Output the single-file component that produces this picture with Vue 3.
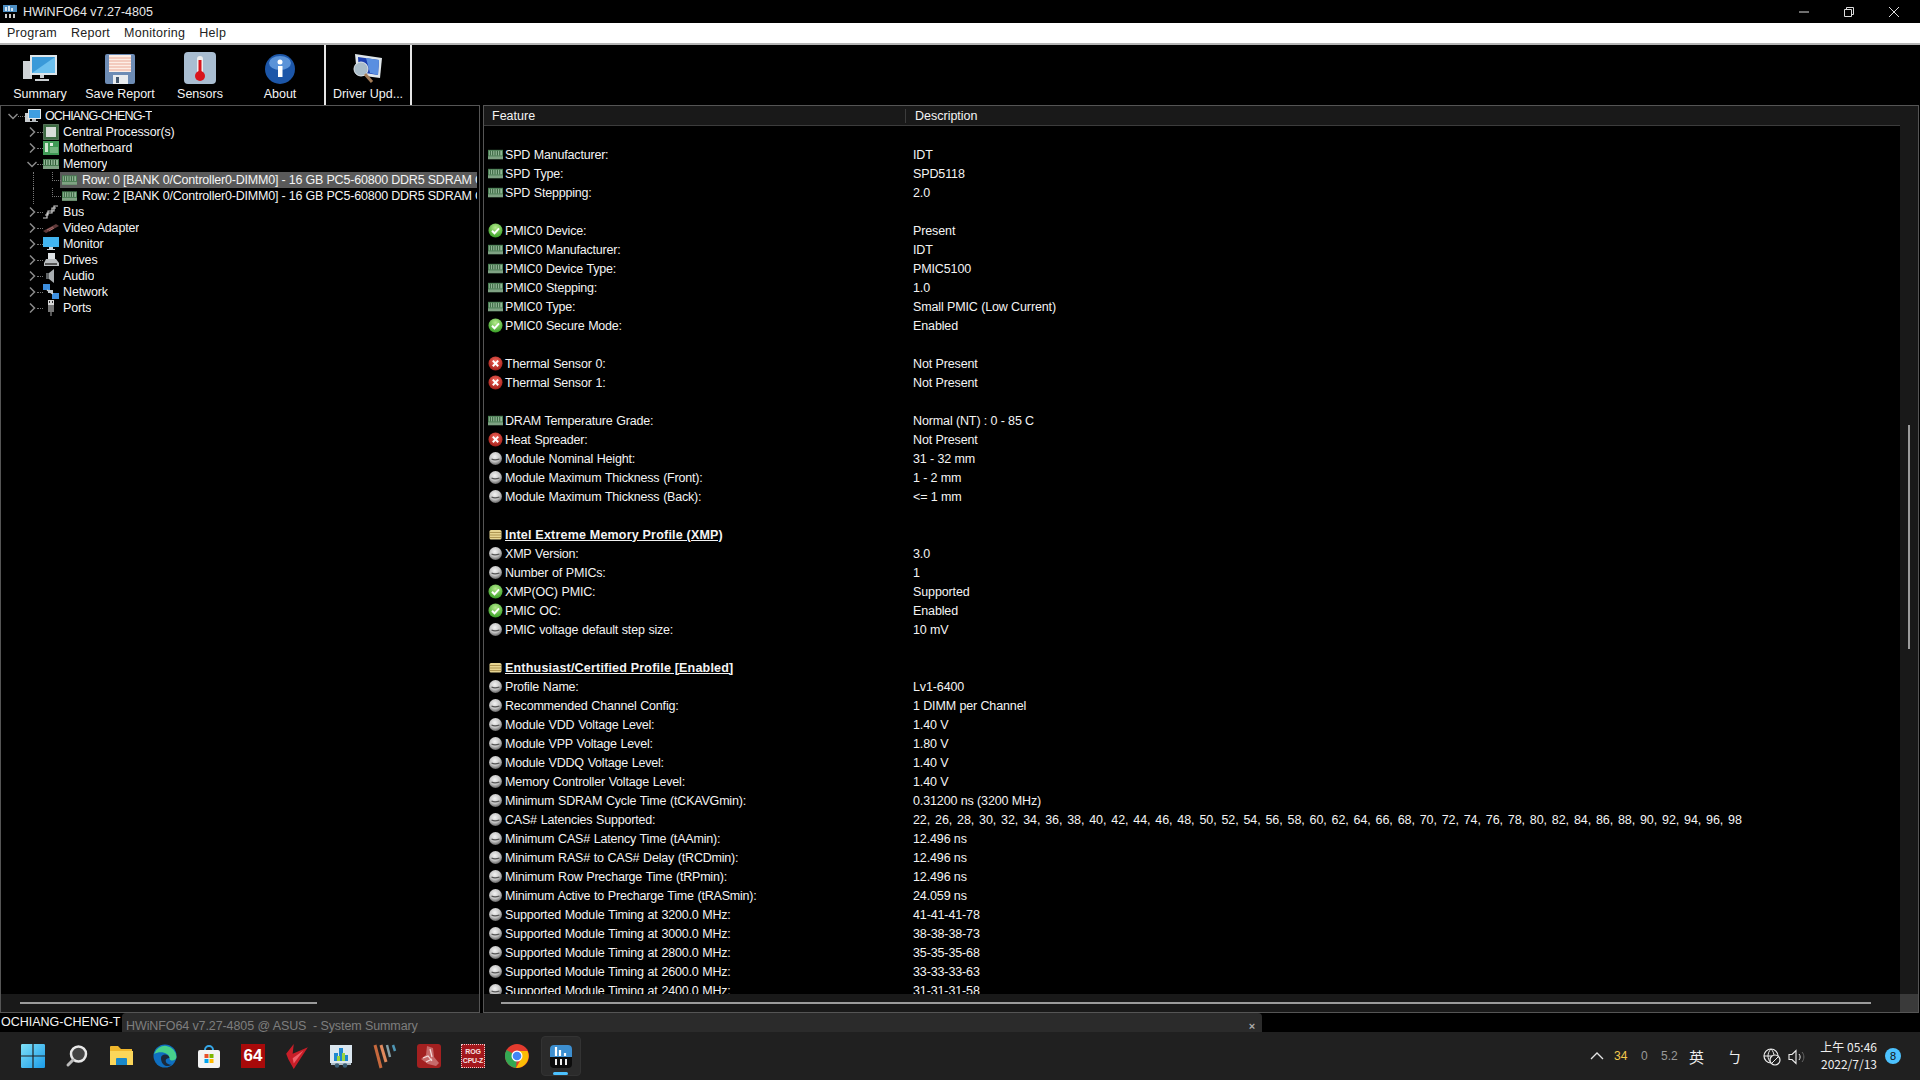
<template>
  <div class="window">
    <svg class="defs" width="0" height="0">
      <defs>
        <linearGradient id="win-blue" x1="0" y1="0" x2="1" y2="1">
          <stop offset="0" stop-color="#7fe0f7" />
          <stop offset="1" stop-color="#1a9be8" />
        </linearGradient>
        <radialGradient id="info-ball" cx="0.45" cy="0.35" r="0.7">
          <stop offset="0" stop-color="#f4f4f4" />
          <stop offset="0.55" stop-color="#c4c4c4" />
          <stop offset="1" stop-color="#555555" />
        </radialGradient>
        <radialGradient id="ok-ball" cx="0.5" cy="0.3" r="0.75">
          <stop offset="0" stop-color="#b5ea8c" />
          <stop offset="1" stop-color="#2f9a1e" />
        </radialGradient>
        <radialGradient id="bad-ball" cx="0.5" cy="0.35" r="0.7">
          <stop offset="0" stop-color="#f4685c" />
          <stop offset="1" stop-color="#9c1712" />
        </radialGradient>
      </defs>
      <symbol id="ram" viewBox="0 0 16 12">
        <rect x="0" y="1" width="16" height="10" fill="#467c50" />
        <rect x="1" y="2" width="14" height="5" fill="#8fb594" />
        <path d="M2.500 2v5M5 2v5M7.500 2v5M10 2v5M12.500 2v5" stroke="#2f5a36" stroke-width="1" />
        <rect x="0" y="8" width="16" height="3" fill="#7fa283" />
      </symbol>
      <symbol id="ok" viewBox="0 0 15 15">
        <circle cx="7.500" cy="7.500" r="7" fill="url(#ok-ball)" />
        <path d="M4 7.800l2.500 2.500 4.500-5" fill="none" stroke="#fff" stroke-width="2" />
      </symbol>
      <symbol id="bad" viewBox="0 0 15 15">
        <circle cx="7.500" cy="7.500" r="7" fill="url(#bad-ball)" />
        <path d="M4.800 4.600l5.400 5.600M10.200 4.600l-5.400 5.600" stroke="#fff" stroke-width="2" />
      </symbol>
      <symbol id="info" viewBox="0 0 15 15">
        <circle cx="7.500" cy="7.500" r="6.500" fill="url(#info-ball)" />
        <path d="M3.500 8c2 1 5 1 8 0" fill="none" stroke="#555" stroke-width="1.300" />
      </symbol>
      <symbol id="folder" viewBox="0 0 15 15">
        <rect x="1.500" y="3" width="12" height="9.500" rx="1.500" fill="#e7d592" />
        <path d="M2 5.500h11M2 8h11M2 10.500h11" stroke="#a88f4c" stroke-width="0.900" />
      </symbol>
      <symbol id="pc" viewBox="0 0 16 16">
        <rect x="0" y="5" width="5" height="9" fill="#c9ced1" />
        <rect x="3" y="1" width="13" height="10" fill="#e3e8ea" />
        <rect x="4" y="2" width="11" height="8" fill="#3f9ee0" />
        <path d="M7 11h4v2h2v1H5v-1h2z" fill="#b7bdc0" />
      </symbol>
      <symbol id="cpu" viewBox="0 0 16 16">
        <rect x="0.500" y="0.500" width="15" height="15" fill="#3d6b43" stroke="#8bb08e" stroke-dasharray="1 1" />
        <rect x="3" y="3" width="10" height="10" fill="#d9dedb" />
      </symbol>
      <symbol id="mobo" viewBox="0 0 16 16">
        <rect x="0" y="1" width="16" height="14" fill="#3f9a55" />
        <rect x="2" y="3" width="3" height="9" fill="#cfe6cf" />
        <rect x="7" y="3" width="3" height="3" fill="#e3efe3" />
        <path d="M7 8h8M7 10h8M7 12h8" stroke="#a7d3ab" />
      </symbol>
      <symbol id="bus" viewBox="0 0 16 16">
        <path d="M0 14h4V9h5V4h4M2 11h3V7h6V2h4" fill="none" stroke="#cfcfcf" stroke-width="1.200" />
      </symbol>
      <symbol id="gpu" viewBox="0 0 16 16">
        <path d="M0 11l13-7 3 2-13 7z" fill="#5f3a3a" />
        <path d="M4 10l6-3M6 11l5-3" stroke="#a86a6a" />
      </symbol>
      <symbol id="monitor" viewBox="0 0 16 16">
        <rect x="0" y="1" width="16" height="10" fill="#42b4f0" />
        <path d="M6 11h4v2h2v1H4v-1h2z" fill="#c7d3da" />
      </symbol>
      <symbol id="drive" viewBox="0 0 16 16">
        <rect x="5" y="1" width="7" height="6" fill="#dfe3e6" />
        <path d="M3 7h10l3 4v3H1v-3z" fill="#b9bdc0" />
        <rect x="2" y="11" width="12" height="2" fill="#555" />
      </symbol>
      <symbol id="audio" viewBox="0 0 16 16">
        <path d="M3 5h3l5-4v14l-5-4H3z" fill="#a8adb0" />
        <rect x="3" y="5" width="3" height="6" fill="#5f6365" />
      </symbol>
      <symbol id="net" viewBox="0 0 16 16">
        <rect x="0" y="0" width="7" height="6" fill="#3d8fe0" />
        <rect x="9" y="9" width="7" height="6" fill="#3d8fe0" />
        <path d="M4 6l6 4" stroke="#d9d9d9" stroke-width="1.500" />
        <rect x="5" y="6" width="5" height="3" fill="#bfc6cc" />
      </symbol>
      <symbol id="port" viewBox="0 0 16 16">
        <rect x="5" y="0" width="6" height="5" fill="#d8d8d8" />
        <path d="M6.500 1v2M9.500 1v2" stroke="#333" />
        <rect x="5" y="5" width="6" height="7" fill="#777" />
        <rect x="7" y="12" width="2" height="4" fill="#555" />
      </symbol>
    </svg>

    <header class="titlebar">
      <svg class="app-icon" viewBox="0 0 14 14" width="14" height="14">
        <rect width="14" height="7" fill="#4d8fc4" />
        <path d="M3 2v4M6 1v5M9 3v3" stroke="#fff" stroke-width="1.500" />
        <path d="M3 9v4M7 9v4M11 9v4" stroke="#ddd" stroke-width="1.800" />
      </svg>
      <span class="title">HWiNFO64 v7.27-4805</span>
      <div class="win-btns">
        <svg viewBox="0 0 12 12" width="12" height="12"><path d="M1 6h10" stroke="#ddd" /></svg>
        <svg viewBox="0 0 12 12" width="12" height="12"><path d="M1.500 3.500h7v7h-7zM3.500 3.500v-2h7v7h-2" fill="none" stroke="#ddd" /></svg>
        <svg viewBox="0 0 12 12" width="12" height="12"><path d="M1 1l10 10M11 1L1 11" stroke="#ddd" /></svg>
      </div>
    </header>

    <nav class="menubar">
      <span v-for="m in menus" :key="m" class="menu-item">{{ m }}</span>
    </nav>

    <div class="toolbar">
      <div class="tool">
        <svg viewBox="0 0 34 30" width="34" height="30">
          <rect x="0" y="7" width="9" height="18" fill="#cfd3d6" />
          <rect x="7" y="1" width="27" height="20" fill="#dfe6ea" />
          <rect x="9" y="3" width="23" height="16" fill="#3a9ad9" />
          <path d="M9 19L32 3v16z" fill="#6cc0ee" />
          <path d="M17 21h4v3h-4zM12 25h14v2H12z" fill="#c9ced1" />
        </svg>
        <span>Summary</span>
      </div>
      <div class="tool">
        <svg viewBox="0 0 30 30" width="30" height="30">
          <rect width="30" height="30" rx="2" fill="#6d8cb5" />
          <rect x="4" y="1" width="22" height="17" fill="#fdeee6" />
          <path d="M4 4h22M4 7h22M4 10h22M4 13h22M4 16h22" stroke="#e9a896" />
          <rect x="8" y="21" width="15" height="9" fill="#e9ecef" />
          <rect x="11" y="23" width="3" height="6" fill="#44586f" />
        </svg>
        <span>Save Report</span>
      </div>
      <div class="tool">
        <svg viewBox="0 0 32 32" width="32" height="32">
          <rect width="32" height="32" rx="4" fill="#a9bdd1" />
          <rect x="13" y="4" width="6" height="18" rx="3" fill="#eee" />
          <rect x="14.500" y="8" width="3" height="15" fill="#d8131b" />
          <circle cx="16" cy="24" r="5" fill="#d8131b" />
        </svg>
        <span>Sensors</span>
      </div>
      <div class="tool">
        <svg viewBox="0 0 30 30" width="30" height="30">
          <circle cx="15" cy="15" r="15" fill="#1c56a8" />
          <ellipse cx="15" cy="9" rx="11" ry="7" fill="#5b93d8" />
          <rect x="13" y="12" width="4.500" height="11" fill="#fff" />
          <circle cx="15" cy="8" r="2.500" fill="#fff" />
        </svg>
        <span>About</span>
      </div>
      <div class="tool driver">
        <svg viewBox="0 0 32 32" width="32" height="32">
          <path d="M3 2l27 4-2 20-23-3z" fill="#dfe6ea" />
          <path d="M6 5l21 3-1 15L7 20z" fill="#1c3fb0" />
          <path d="M14 6l13 2-1 15-8-2z" fill="#5a8fe0" />
          <circle cx="9" cy="17" r="7" fill="#a9bcc9" stroke="#dfe6ea" />
          <path d="M13 22l7 8" stroke="#a37b57" stroke-width="3" />
        </svg>
        <span>Driver Upd...</span>
      </div>
    </div>

    <main class="panes">
      <section class="tree-pane">
        <div class="tree">
          <div v-for="n in tree" :key="n.label" class="tree-row" :class="n.cls">
            <i v-if="n.cls && n.cls.includes('leaf')" class="vline"></i>
            <template v-if="n.arrow">
              <svg class="arrow" viewBox="0 0 10 10" width="10" height="10">
                <path :d="n.arrow === 'down' ? 'M0.500 3l4.500 4.500 4.500-4.500' : 'M3 0.500l4.500 4.500-4.500 4.500'" fill="none" stroke="#8a8a8a" stroke-width="1.500" />
              </svg>
              <span class="dots"></span>
            </template>
            <svg class="tree-icon"><use :href="'#' + n.icon" /></svg>
            <span class="tree-label">{{ n.label }}</span>
          </div>
        </div>
        <div class="hscroll"><div class="thumb tree-thumb"></div></div>
      </section>

      <section class="list-pane">
        <div class="list-main">
          <div class="list-head">
            <div class="col-feature">Feature</div>
            <div class="col-desc">Description</div>
          </div>
          <div class="list-body">
            <div v-for="(r, i) in rows" :key="i" class="row">
              <template v-if="r.f">
                <svg class="row-icon"><use :href="'#' + r.i" /></svg>
                <span class="feature" :class="{ heading: r.i === 'folder' }">{{ r.f }}</span>
                <span class="desc" :class="{ numbers: r.f.startsWith('CAS#') }">{{ r.d }}</span>
              </template>
            </div>
          </div>
        </div>
        <div class="vscroll"><div class="v-thumb"></div></div>
        <div class="hscroll list-h"><div class="thumb list-thumb"></div><div class="corner"></div></div>
      </section>
    </main>

    <div class="statusbar">
      <span class="host">OCHIANG-CHENG-T</span>
      <div class="tip">
        <span class="tip-text">HWiNFO64 v7.27-4805 @ ASUS&nbsp; - System Summary</span>
        <span class="tip-close">×</span>
      </div>
    </div>

    <footer class="taskbar">
      <div class="task-icons">
        <div class="task"><svg viewBox="0 0 20 20" width="24" height="24"><path d="M0 1a1 1 0 0 1 1-1h8.500v9.500H0zM10.500 0H19a1 1 0 0 1 1 1v8.500h-9.500zM0 10.500h9.500V20H1a1 1 0 0 1-1-1zM10.500 10.500H20V19a1 1 0 0 1-1 1h-8.500z" fill="url(#win-blue)" /></svg></div>
        <div class="task"><svg viewBox="0 0 24 24" width="24" height="24"><circle cx="13.500" cy="10" r="7.500" fill="#444" stroke="#e8e8e8" stroke-width="2.500" /><path d="M8 16l-5 5" stroke="#bbb" stroke-width="3" stroke-linecap="round" /></svg></div>
        <div class="task"><svg viewBox="0 0 24 24" width="24" height="24"><path d="M1 3a1 1 0 0 1 1-1h7l3 3h11v16H1z" fill="#f0b72c" /><path d="M1 7h23v14H1z" fill="#fbd65a" /><path d="M8 14h9a1 1 0 0 1 1 1v6H7v-6a1 1 0 0 1 1-1z" fill="#1a88c9" /></svg></div>
        <div class="task"><svg viewBox="0 0 24 24" width="24" height="24"><circle cx="12" cy="12" r="11.500" fill="#0f6fc0" /><path d="M1 10a11.500 11.500 0 0 1 22.500 3c0 4-7 5-7 1 0-5-9-8-15.500-4z" fill="#47d18c" /><path d="M8 14c0-4 7-5 8.500 0-3 0-5 2-3 5 1 1 3 2 5 1.500-5 4-10.500 0-10.500-6.500z" fill="#1c2a3a" /></svg></div>
        <div class="task"><svg viewBox="0 0 24 24" width="24" height="26"><path d="M8 6a4 4 0 0 1 8 0" fill="none" stroke="#35a7e8" stroke-width="2" /><rect x="1" y="6" width="22" height="18" rx="2" fill="#f3f3f3" /><path d="M7.500 10h4v4h-4z" fill="#e8502a" /><path d="M12.500 10h4v4h-4z" fill="#7db600" /><path d="M7.500 15h4v4h-4z" fill="#00a4ef" /><path d="M12.500 15h4v4h-4z" fill="#ffb900" /></svg></div>
        <div class="task"><div class="badge64">64</div></div>
        <div class="task"><svg viewBox="0 0 24 24" width="26" height="26"><path d="M2 10l7-9-1 9 14-6-13 20-5-9z" fill="#c81e28" /><path d="M8 14l10-7-9 12z" fill="#f0606a" /></svg></div>
        <div class="task"><svg viewBox="0 0 24 24" width="24" height="24"><rect x="1" y="1" width="22" height="18" fill="#dbe7f0" /><path d="M5 17V9h4v8zM10 17V4h4v13zM15 17v-6h4v6z" fill="#1f88d0" /><path d="M8 17v-5h3v5zM13 17v-8h3v8z" fill="#9ad53f" /><rect x="2" y="19" width="20" height="2" fill="#aebcc6" /><circle cx="8" cy="21.500" r="2.300" fill="#3a5d74" /><circle cx="16" cy="21.500" r="2.300" fill="#3a5d74" /></svg></div>
        <div class="task"><svg viewBox="0 0 24 24" width="24" height="26"><path d="M2 1l6 23" stroke="#c7693d" stroke-width="3" /><path d="M8 1l5 17" stroke="#e08a5e" stroke-width="3" /><path d="M14 1l3 12" stroke="#86a0a8" stroke-width="2.500" /><path d="M20 1l2 6" stroke="#4f97b5" stroke-width="2.500" /></svg></div>
        <div class="task"><svg viewBox="0 0 24 24" width="24" height="24"><rect width="24" height="24" rx="3" fill="#a32020" /><path d="M10 2l6 2 1 9 5 6-3 3-8-2-7-5 5-4z" fill="#c76a6a" /><path d="M6 14l5-2 4 5M13 5l2 8M9 18l6-3" fill="none" stroke="#f5dcdc" stroke-width="1.200" /></svg></div>
        <div class="task"><div class="cpuz"><span>ROG</span><span>CPU-Z</span></div></div>
        <div class="task"><svg viewBox="0 0 24 24" width="24" height="24"><circle cx="12" cy="12" r="12" fill="#e33b2e" /><path d="M12 12L1.600 6A12 12 0 0 0 11 24z" fill="#34a853" /><path d="M12 7h10.500A12 12 0 0 1 11 24l5.500-10z" fill="#fbbc05" /><circle cx="12" cy="12" r="5.500" fill="#fff" /><circle cx="12" cy="12" r="4.300" fill="#4285f4" /></svg></div>
        <div class="task active">
          <svg viewBox="0 0 22 23" width="22" height="23">
            <rect width="22" height="23" rx="4" fill="#0c0c0c" />
            <path d="M0 12V4a4 4 0 0 1 4-4h14a4 4 0 0 1 4 4v8z" fill="#3d8fd0" />
            <path d="M6 2v9M10 5v6M15 8v3" stroke="#fff" stroke-width="2.200" />
            <path d="M6 14v6M11 14v6M16 14v6" stroke="#eee" stroke-width="2" />
          </svg>
          <i class="running"></i>
        </div>
      </div>
      <div class="tray">
        <svg viewBox="0 0 14 8" width="14" height="8"><path d="M1 7l6-6 6 6" fill="none" stroke="#e6e6e6" stroke-width="1.300" /></svg>
        <span class="t-num yellow">34</span>
        <span class="t-num zero">0</span>
        <span class="t-num five">5.2</span>
        <span class="ime">英</span>
        <span class="ime2">ㄅ</span>
        <svg class="globe" viewBox="0 0 18 18" width="18" height="18">
          <circle cx="8" cy="8" r="7" fill="none" stroke="#eee" stroke-width="1.200" />
          <path d="M1 8h14M8 1c-4 4-4 10 0 14M8 1c4 4 4 10 0 14" fill="none" stroke="#eee" />
          <circle cx="12" cy="12" r="5" fill="#202020" stroke="#eee" stroke-width="1.200" />
          <path d="M9 15l6-6" stroke="#eee" />
        </svg>
        <svg class="vol" viewBox="0 0 18 16" width="18" height="16">
          <path d="M1 5.500h3l4-4v13l-4-4H1z" fill="none" stroke="#eee" stroke-width="1.100" />
          <path d="M11 5c1.500 2 1.500 4 0 6" fill="none" stroke="#eee" />
          <path d="M14 3c2.500 3 2.500 7 0 10" fill="none" stroke="#666" />
        </svg>
        <div class="clock"><span>上午 05:46</span><span>2022/7/13</span></div>
        <span class="notif">8</span>
      </div>
    </footer>
  </div>
</template>

<script setup>
const menus = ["Program", "Report", "Monitoring", "Help"];

const rowLabel = (n) => `Row: ${n} [BANK 0/Controller0-DIMM0] - 16 GB PC5-60800 DDR5 SDRAM G`;

const tree = [
  { label: "OCHIANG-CHENG-T", arrow: "down", cls: "root", icon: "pc" },
  { label: "Central Processor(s)", arrow: "right", icon: "cpu" },
  { label: "Motherboard", arrow: "right", icon: "mobo" },
  { label: "Memory", arrow: "down", icon: "ram" },
  { label: rowLabel(0), cls: "leaf selected", icon: "ram" },
  { label: rowLabel(2), cls: "leaf", icon: "ram" },
  { label: "Bus", arrow: "right", icon: "bus" },
  { label: "Video Adapter", arrow: "right", icon: "gpu" },
  { label: "Monitor", arrow: "right", icon: "monitor" },
  { label: "Drives", arrow: "right", icon: "drive" },
  { label: "Audio", arrow: "right", icon: "audio" },
  { label: "Network", arrow: "right", icon: "net" },
  { label: "Ports", arrow: "right", icon: "port" },
];

// i = icon symbol, f = feature, d = description; empty object = blank row
const rows = [
  {},
  { i: "ram", f: "SPD Manufacturer:", d: "IDT" },
  { i: "ram", f: "SPD Type:", d: "SPD5118" },
  { i: "ram", f: "SPD Steppping:", d: "2.0" },
  {},
  { i: "ok", f: "PMIC0 Device:", d: "Present" },
  { i: "ram", f: "PMIC0 Manufacturer:", d: "IDT" },
  { i: "ram", f: "PMIC0 Device Type:", d: "PMIC5100" },
  { i: "ram", f: "PMIC0 Stepping:", d: "1.0" },
  { i: "ram", f: "PMIC0 Type:", d: "Small PMIC (Low Current)" },
  { i: "ok", f: "PMIC0 Secure Mode:", d: "Enabled" },
  {},
  { i: "bad", f: "Thermal Sensor 0:", d: "Not Present" },
  { i: "bad", f: "Thermal Sensor 1:", d: "Not Present" },
  {},
  { i: "ram", f: "DRAM Temperature Grade:", d: "Normal (NT) : 0 - 85 C" },
  { i: "bad", f: "Heat Spreader:", d: "Not Present" },
  { i: "info", f: "Module Nominal Height:", d: "31 - 32 mm" },
  { i: "info", f: "Module Maximum Thickness (Front):", d: "1 - 2 mm" },
  { i: "info", f: "Module Maximum Thickness (Back):", d: "<= 1 mm" },
  {},
  { i: "folder", f: "Intel Extreme Memory Profile (XMP)" },
  { i: "info", f: "XMP Version:", d: "3.0" },
  { i: "info", f: "Number of PMICs:", d: "1" },
  { i: "ok", f: "XMP(OC) PMIC:", d: "Supported" },
  { i: "ok", f: "PMIC OC:", d: "Enabled" },
  { i: "info", f: "PMIC voltage default step size:", d: "10 mV" },
  {},
  { i: "folder", f: "Enthusiast/Certified Profile [Enabled]" },
  { i: "info", f: "Profile Name:", d: "Lv1-6400" },
  { i: "info", f: "Recommended Channel Config:", d: "1 DIMM per Channel" },
  { i: "info", f: "Module VDD Voltage Level:", d: "1.40 V" },
  { i: "info", f: "Module VPP Voltage Level:", d: "1.80 V" },
  { i: "info", f: "Module VDDQ Voltage Level:", d: "1.40 V" },
  { i: "info", f: "Memory Controller Voltage Level:", d: "1.40 V" },
  { i: "info", f: "Minimum SDRAM Cycle Time (tCKAVGmin):", d: "0.31200 ns (3200 MHz)" },
  { i: "info", f: "CAS# Latencies Supported:", d: "22, 26, 28, 30, 32, 34, 36, 38, 40, 42, 44, 46, 48, 50, 52, 54, 56, 58, 60, 62, 64, 66, 68, 70, 72, 74, 76, 78, 80, 82, 84, 86, 88, 90, 92, 94, 96, 98" },
  { i: "info", f: "Minimum CAS# Latency Time (tAAmin):", d: "12.496 ns" },
  { i: "info", f: "Minimum RAS# to CAS# Delay (tRCDmin):", d: "12.496 ns" },
  { i: "info", f: "Minimum Row Precharge Time (tRPmin):", d: "12.496 ns" },
  { i: "info", f: "Minimum Active to Precharge Time (tRASmin):", d: "24.059 ns" },
  { i: "info", f: "Supported Module Timing at 3200.0 MHz:", d: "41-41-41-78" },
  { i: "info", f: "Supported Module Timing at 3000.0 MHz:", d: "38-38-38-73" },
  { i: "info", f: "Supported Module Timing at 2800.0 MHz:", d: "35-35-35-68" },
  { i: "info", f: "Supported Module Timing at 2600.0 MHz:", d: "33-33-33-63" },
  { i: "info", f: "Supported Module Timing at 2400.0 MHz:", d: "31-31-31-58" },
];
</script>

<style>
html,
body {
  margin: 0;
  background: #000;
}
</style>

<style scoped>
* {
  box-sizing: border-box;
}
.window {
  width: 1920px;
  height: 1080px;
  display: flex;
  flex-direction: column;
  background: #000;
  color: #f4f4f4;
  font-family: "Liberation Sans", Arial, sans-serif;
  font-size: 12.5px;
  overflow: hidden;
}
.defs {
  position: absolute;
}
.titlebar {
  height: 23px;
  display: flex;
  align-items: center;
  padding-left: 3px;
  flex: none;
}
.title {
  margin-left: 6px;
  color: #e8e8e8;
}
.win-btns {
  margin-left: auto;
  display: flex;
  gap: 33px;
  padding-right: 20px;
}
.menubar {
  height: 22px;
  flex: none;
  background: #fff;
  border-bottom: 2px solid #b4b4b4;
  display: flex;
  align-items: center;
  padding-left: 7px;
  gap: 14px;
  color: #222;
  letter-spacing: 0.28px;
}
.toolbar {
  height: 60px;
  flex: none;
  display: flex;
}
.tool {
  width: 80px;
  display: flex;
  flex-direction: column;
  align-items: center;
  justify-content: flex-end;
  padding-bottom: 4px;
  gap: 3px;
}
.tool.driver {
  width: 88px;
  margin-left: 4px;
  border-left: 2px solid #e6e6e6;
  border-right: 2px solid #e6e6e6;
}
.panes {
  flex: 1;
  display: flex;
  min-height: 0;
  gap: 3px;
}
.tree-pane {
  width: 480px;
  flex: none;
  border: 1px solid #555;
  display: flex;
  flex-direction: column;
}
.tree {
  flex: 1;
  padding-top: 2px;
  overflow: hidden;
}
.tree-row {
  height: 16px;
  display: flex;
  align-items: center;
  padding-left: 26px;
  white-space: nowrap;
  letter-spacing: -0.15px;
  position: relative;
}
.tree-row.root {
  padding-left: 7px;
}
.tree-row.root .tree-label {
  letter-spacing: -0.85px;
}
.tree-row.leaf {
  margin-left: 59px;
  margin-right: 2px;
  padding-left: 2px;
  letter-spacing: -0.2px;
}
.tree-row.leaf .tree-icon {
  width: 15px;
  margin-right: 3px;
}
.tree-row.selected {
  background: #5a5a5a;
}
.tree-row.leaf::before {
  content: "";
  position: absolute;
  left: -8px;
  top: 0;
  width: 8px;
  height: 8px;
  border-left: 1px dotted #777;
  border-bottom: 1px dotted #777;
}
.vline {
  position: absolute;
  left: -27px;
  top: 0;
  height: 16px;
  border-left: 1px dotted #777;
}
.arrow {
  flex: none;
}
.dots {
  width: 6px;
  flex: none;
  border-top: 1px dotted #777;
}
.root .dots {
  width: 7px;
}
.tree-icon {
  width: 16px;
  height: 16px;
  flex: none;
  margin-right: 2px;
}
.tree-label {
  padding-left: 2px;
  overflow: hidden;
}
.hscroll {
  height: 18px;
  flex: none;
  background: #191919;
  display: flex;
  align-items: center;
  position: relative;
}
.thumb {
  height: 2px;
  background: #9b9b9b;
}
.tree-thumb {
  width: 297px;
  margin-left: 19px;
}
.list-pane {
  flex: 1;
  border: 1px solid #555;
  margin-right: 1px;
  display: grid;
  grid-template-columns: 1fr 18px;
  grid-template-rows: 1fr 18px;
  min-width: 0;
  min-height: 0;
}
.list-main {
  min-width: 0;
  min-height: 0;
  display: flex;
  flex-direction: column;
}
.list-head {
  height: 20px;
  flex: none;
  display: flex;
  align-items: center;
  background: #191919;
  border-bottom: 1px solid #3c3c3c;
}
.col-feature {
  width: 422px;
  padding-left: 8px;
  border-right: 1px solid #3c3c3c;
}
.col-desc {
  padding-left: 9px;
}
.list-body {
  flex: 1;
  overflow: hidden;
  min-height: 0;
}
.row {
  height: 19px;
  display: flex;
  align-items: center;
  white-space: nowrap;
  padding-left: 4px;
}
.row-icon {
  width: 15px;
  height: 15px;
  flex: none;
  margin-right: 2px;
}
.feature {
  width: 408px;
  flex: none;
  letter-spacing: -0.2px;
  word-spacing: 0.5px;
}
.heading {
  font-weight: 700;
  letter-spacing: 0.2px;
  word-spacing: 0;
  text-decoration: underline;
}
.desc {
  letter-spacing: -0.12px;
}
.numbers {
  letter-spacing: -0.08px;
  word-spacing: 1.5px;
}
.vscroll {
  background: #191919;
  display: flex;
  justify-content: center;
}
.v-thumb {
  width: 2px;
  height: 224px;
  margin-top: 319px;
  background: #9b9b9b;
}
.list-h {
  grid-column: 1 / 3;
}
.list-thumb {
  width: 1370px;
  margin-left: 17px;
}
.corner {
  position: absolute;
  right: 0;
  top: 0;
  width: 18px;
  height: 18px;
  background: #3a3a3a;
}
.statusbar {
  height: 19px;
  flex: none;
  display: flex;
  align-items: stretch;
}
.host {
  width: 122px;
  flex: none;
  line-height: 18px;
  padding-left: 1px;
  white-space: nowrap;
}
.tip {
  width: 1140px;
  background: #2b2b2b;
  color: #7e7e7e;
  display: flex;
  align-items: flex-end;
  justify-content: space-between;
  padding: 0 6px 0 4px;
  border-radius: 4px 4px 0 0;
  letter-spacing: -0.1px;
}
.tip-text {
  position: relative;
  top: 1px;
}
.tip-close {
  color: #aaa;
  font-size: 11px;
  font-weight: 700;
  margin-right: 1px;
}
.taskbar {
  height: 48px;
  flex: none;
  background: #202020;
  display: flex;
  align-items: center;
  justify-content: space-between;
}
.task-icons {
  display: flex;
  padding-left: 11px;
}
.task {
  width: 44px;
  height: 40px;
  display: flex;
  align-items: center;
  justify-content: center;
  position: relative;
}
.task.active {
  width: 40px;
  margin: 0 2px;
  background: #2b2b2b;
  border: 1px solid #333;
  border-radius: 4px;
}
.running {
  position: absolute;
  bottom: 0;
  left: 11px;
  width: 15px;
  height: 3px;
  border-radius: 2px;
  background: #4cc2ff;
}
.badge64 {
  width: 24px;
  height: 24px;
  background: #a80a0a;
  color: #fff;
  font-weight: 700;
  font-size: 17px;
  line-height: 24px;
  text-align: center;
}
.cpuz {
  width: 24px;
  height: 24px;
  background: #a3171c;
  border: 1px dotted #f0c8c8;
  color: #f7e3e3;
  font-size: 7px;
  font-weight: 700;
  line-height: 9px;
  letter-spacing: -0.2px;
  display: flex;
  flex-direction: column;
  align-items: center;
  justify-content: center;
}
.tray {
  color: #eee;
  font-size: 12px;
  position: relative;
  height: 100%;
  width: 330px;
}
.tray > * {
  position: absolute;
}
.tray > svg:first-child {
  left: 0;
  top: 20px;
}
.t-num {
  top: 17px;
}
.yellow {
  color: #f2c94c;
  left: 24px;
}
.zero {
  color: #999;
  left: 51px;
}
.five {
  color: #999;
  left: 71px;
}
.ime {
  left: 99px;
  font-size: 15px;
  top: 14px;
  font-family: "Noto Sans CJK TC", sans-serif;
}
.ime2 {
  left: 137px;
  font-size: 15px;
  top: 14px;
  font-family: "Noto Sans CJK TC", sans-serif;
}
.globe {
  left: 173px;
  top: 16px;
}
.vol {
  left: 198px;
  top: 17px;
}
.clock {
  left: 230px;
  right: 43px;
  top: 6px;
  display: flex;
  flex-direction: column;
  align-items: flex-end;
  font-family: "Noto Sans CJK TC", "Liberation Sans", sans-serif;
  line-height: 17px;
}
.notif {
  right: 19px;
  top: 16px;
  width: 16px;
  height: 16px;
  border-radius: 50%;
  background: #4cc2ff;
  color: #111;
  text-align: center;
  line-height: 16px;
  font-size: 11px;
}
</style>
